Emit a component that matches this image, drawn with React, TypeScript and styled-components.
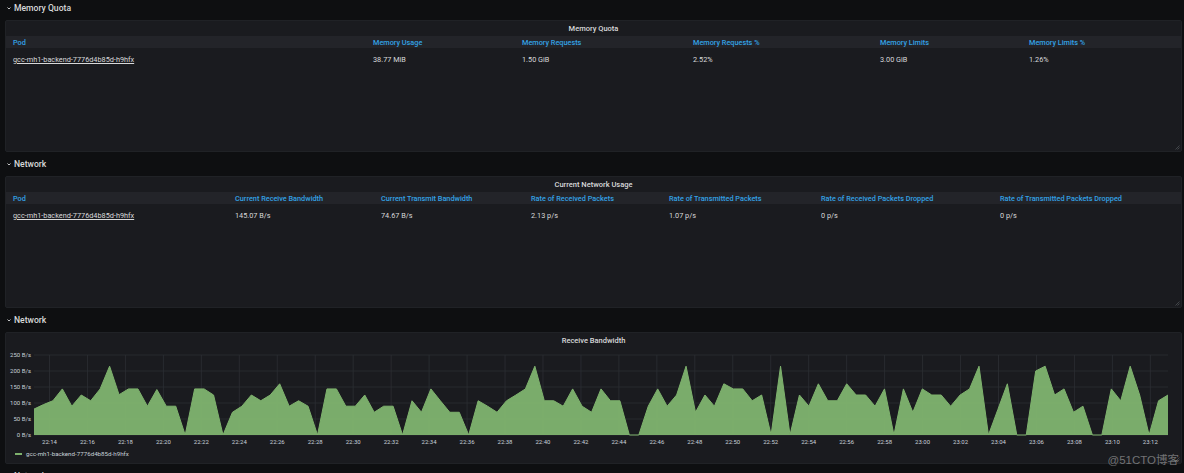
import React from "react";
import styled, { createGlobalStyle } from "styled-components";

const GlobalStyle = createGlobalStyle`
  html, body { margin: 0; padding: 0; background: #0e0f11; overflow: hidden; }
  body { font-family: Roboto, "Helvetica Neue", Arial, sans-serif; color: #c7d0d9; }
`;

const Page = styled.div`
  width: 1184px;
  height: 473px;
  overflow: hidden;
  position: relative;
  background: #0e0f11;
`;

const Stack = styled.div`
  display: flex;
  flex-direction: column;
  margin-top: -4px;
`;

const RowHeader = styled.div`
  height: 24px;
  flex-shrink: 0;
  display: flex;
  align-items: center;
  gap: 2px;
  padding-left: 6px;
  font-size: 8.6px;
  font-weight: 500;
  color: #d8d9da;
`;

const Panel = styled.section`
  margin-left: 5px;
  width: 1177px;
  height: 132px;
  flex-shrink: 0;
  box-sizing: border-box;
  background: #1a1b1f;
  border: 1px solid #202226;
  border-radius: 2px;
  display: flex;
  flex-direction: column;
  position: relative;
`;

const PanelTitle = styled.div`
  height: 14px;
  display: flex;
  align-items: center;
  justify-content: center;
  font-size: 7.5px;
  font-weight: 500;
  color: #d8d9da;
`;

const TableGrid = styled.div<{ $cols: string }>`
  display: grid;
  grid-template-columns: ${(p) => p.$cols};
  margin-top: 1px;
`;

const HeadCell = styled.div`
  background: #232429;
  height: 12px;
  display: flex;
  align-items: center;
  padding-left: 7px;
  font-size: 7.3px;
  font-weight: 500;
  color: #33a2e5;
  white-space: nowrap;
`;

const Cell = styled.div<{ $link?: boolean }>`
  height: 22px;
  display: flex;
  align-items: center;
  padding-left: 7px;
  font-size: 7.3px;
  color: #d8d9da;
  white-space: nowrap;
  text-decoration: ${(p) => (p.$link ? "underline" : "none")};
  text-underline-offset: 1px;
`;

const ChartSvg = styled.svg`
  display: block;
  width: 1175px;
  height: 102px;
`;

const Legend = styled.div`
  height: 10px;
  display: flex;
  align-items: center;
  gap: 4px;
  padding-left: 9px;
  font-size: 6.2px;
  color: #c7d0d9;
`;

const Swatch = styled.span`
  width: 7px;
  height: 2px;
  background: #7eb26d;
`;

const Resize = styled.svg`
  position: absolute;
  right: 1px;
  bottom: 1px;
  width: 5px;
  height: 5px;
`;

const Watermark = styled.div`
  position: absolute;
  right: 5px;
  bottom: 6px;
  font-family: "Liberation Sans", "Noto Sans CJK SC", sans-serif;
  font-size: 11.5px;
  color: rgba(190, 190, 190, 0.55);
`;

const Chevron = () => (
  <svg width="6" height="6" viewBox="0 0 6 6">
    <polyline points="1.5,2.5 3,4 4.5,2.5" fill="none" stroke="#d8d9da" strokeWidth="0.9" />
  </svg>
);

const ResizeHandle = () => (
  <Resize viewBox="0 0 5 5">
    <line x1="0.5" y1="4.5" x2="4.5" y2="0.5" stroke="#55575c" strokeWidth="0.7" />
    <line x1="2.5" y1="4.5" x2="4.5" y2="2.5" stroke="#55575c" strokeWidth="0.7" />
  </Resize>
);

const POD = "gcc-mh1-backend-7776d4b85d-h9hfx";

const memCols = ["Pod", "Memory Usage", "Memory Requests", "Memory Requests %", "Memory Limits", "Memory Limits %"];
const memVals = [POD, "38.77 MiB", "1.50 GiB", "2.52%", "3.00 GiB", "1.26%"];

const netCols = [
  "Pod",
  "Current Receive Bandwidth",
  "Current Transmit Bandwidth",
  "Rate of Received Packets",
  "Rate of Transmitted Packets",
  "Rate of Received Packets Dropped",
  "Rate of Transmitted Packets Dropped",
];
const netVals = [POD, "145.07 B/s", "74.67 B/s", "2.13 p/s", "1.07 p/s", "0 p/s", "0 p/s"];

const DATA = [
  81, 95, 107, 144, 90, 125, 107, 144, 215, 126, 144, 144, 90, 142, 90, 90, 0, 144, 144, 125,
  0, 71, 90, 125, 107, 125, 160, 90, 107, 90, 0, 144, 144, 90, 90, 125, 71, 90, 90, 0,
  107, 71, 144, 107, 71, 71, 0, 107, 90, 71, 107, 125, 144, 215, 107, 107, 90, 144, 90, 71,
  144, 107, 107, 0, 0, 90, 144, 90, 125, 215, 71, 125, 90, 160, 144, 144, 107, 125, 0, 215,
  0, 125, 90, 160, 107, 107, 160, 125, 125, 90, 144, 0, 144, 71, 144, 125, 125, 90, 125, 144,
  215, 0, 80, 160, 0, 0, 200, 215, 125, 144, 71, 90, 0, 0, 144, 107, 215, 125, 0, 107, 125,
];

const X0 = 28;
const X1 = 1162;
const YTOP = 8;
const YBASE = 88;

function Chart() {
  const step = (X1 - X0) / (DATA.length - 1);
  const yOf = (v: number) => YBASE - (v / 250) * (YBASE - YTOP);
  const pts = DATA.map((v, i) => `${(X0 + i * step).toFixed(2)},${yOf(v).toFixed(2)}`);
  const area = `M${X0},${YBASE} L${pts.join(" L")} L${X1},${YBASE} Z`;
  const line = `M${pts.join(" L")}`;
  const yTicks = [250, 200, 150, 100, 50, 0];
  const times: string[] = [];
  for (let m = 14; m <= 72; m += 2) {
    const h = 22 + Math.floor(m / 60);
    const mm = m % 60;
    times.push(`${h}:${mm.toString().padStart(2, "0")}`);
  }
  const tx = (k: number) => 43.5 + k * 37.96;
  return (
    <ChartSvg viewBox="0 0 1175 102">
      {yTicks.map((v) => (
        <g key={v}>
          <line x1={X0} x2={X1} y1={yOf(v)} y2={yOf(v)} stroke="#2c2e33" strokeWidth="0.8" />
          <text x={25} y={yOf(v) + 2} fontSize="6" fill="#c7d0d9" textAnchor="end" fontFamily="Roboto, sans-serif">
            {v} B/s
          </text>
        </g>
      ))}
      {times.map((t, k) => (
        <g key={t}>
          <line x1={tx(k)} x2={tx(k)} y1={YTOP} y2={YBASE} stroke="#2c2e33" strokeWidth="0.8" />
          <text x={tx(k)} y={97} fontSize="6" fill="#c7d0d9" textAnchor="middle" fontFamily="Roboto, sans-serif">
            {t}
          </text>
        </g>
      ))}
      <path d={area} fill="#7eb26d" fillOpacity="0.97" />
      <path d={line} fill="none" stroke="#7eb26d" strokeWidth="1" />
    </ChartSvg>
  );
}

export default function App() {
  return (
    <Page>
      <GlobalStyle />
      <Stack>
        <RowHeader>
          <Chevron />
          Memory Quota
        </RowHeader>
        <Panel>
          <PanelTitle>Memory Quota</PanelTitle>
          <TableGrid $cols="360px 149px 171px 187px 149px 1fr">
            {memCols.map((c) => (
              <HeadCell key={c}>{c}</HeadCell>
            ))}
            {memVals.map((v, i) => (
              <Cell key={i} $link={i === 0}>
                {v}
              </Cell>
            ))}
          </TableGrid>
          <ResizeHandle />
        </Panel>
        <RowHeader>
          <Chevron />
          Network
        </RowHeader>
        <Panel>
          <PanelTitle>Current Network Usage</PanelTitle>
          <TableGrid $cols="222px 146px 150px 138px 152px 179px 1fr">
            {netCols.map((c) => (
              <HeadCell key={c}>{c}</HeadCell>
            ))}
            {netVals.map((v, i) => (
              <Cell key={i} $link={i === 0}>
                {v}
              </Cell>
            ))}
          </TableGrid>
          <ResizeHandle />
        </Panel>
        <RowHeader>
          <Chevron />
          Network
        </RowHeader>
        <Panel>
          <PanelTitle>Receive Bandwidth</PanelTitle>
          <Chart />
          <Legend>
            <Swatch />
            {POD}
          </Legend>
          <ResizeHandle />
        </Panel>
        <RowHeader>
          <Chevron />
          Network
        </RowHeader>
      </Stack>
      <Watermark>@51CTO博客</Watermark>
    </Page>
  );
}
